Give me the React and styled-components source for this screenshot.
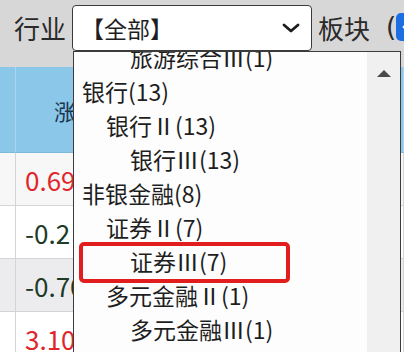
import React from 'react'
import styled, { createGlobalStyle } from 'styled-components'

const GlobalStyle = createGlobalStyle`
  html, body {
    margin: 0;
    padding: 0;
    background: #d8d7d7;
    overflow: hidden;
  }
  body {
    font-family: "Noto Sans CJK SC", "Noto Sans", sans-serif;
  }
`

const rows = [
  { value: '0.69', tone: 'up', bg: '#f7f7f8' },
  { value: '-0.2', tone: 'down', bg: '#ffffff' },
  { value: '-0.70', tone: 'down', bg: '#ececef' },
  { value: '3.10', tone: 'up', bg: '#ffffff' },
]

const options = [
  { label: '旅游综合Ⅲ(1)', level: 2 },
  { label: '银行(13)', level: 0 },
  { label: '银行Ⅱ(13)', level: 1 },
  { label: '银行Ⅲ(13)', level: 2 },
  { label: '非银金融(8)', level: 0 },
  { label: '证券Ⅱ(7)', level: 1 },
  { label: '证券Ⅲ(7)', level: 2, marked: true },
  { label: '多元金融Ⅱ(1)', level: 1 },
  { label: '多元金融Ⅲ(1)', level: 2 },
  { label: '保险(2)', level: 0 },
]

const App = () => {
  return (
    <Page>
      <GlobalStyle />
      <TopBar>
        <Label>行业</Label>
        <SelectBox>
          <span>【全部】</span>
          <svg width="18" height="10" viewBox="0 0 18 10">
            <path d="M2 2 L9 8 L16 2" fill="none" stroke="#1c1c1c" strokeWidth="2.8" strokeLinecap="round" strokeLinejoin="round" />
          </svg>
        </SelectBox>
        <Label $left={6}>板块</Label>
        <Paren>(</Paren>
        <Check>
          <svg width="20" height="20" viewBox="0 0 20 20">
            <path d="M4 10 L8.5 14.5 L16 6" fill="none" stroke="#fff" strokeWidth="2.6" strokeLinecap="round" strokeLinejoin="round" />
          </svg>
        </Check>
      </TopBar>

      <Table>
        <HeadCell />
        <HeadCell $pad>涨幅(%)</HeadCell>
        <HeadCell />
        {rows.map((r, i) => (
          <React.Fragment key={i}>
            <Cell $bg={r.bg} />
            <Cell $bg={r.bg} $tone={r.tone}>{r.value}</Cell>
            <Cell $bg={r.bg} />
          </React.Fragment>
        ))}
      </Table>

      <Dropdown>
        <List>
          <Items>
            {options.map((o, i) => (
              <Item key={i} $level={o.level} $marked={o.marked}>{o.label}</Item>
            ))}
          </Items>
        </List>
        <Scrollbar>
          <Arrow />
        </Scrollbar>
      </Dropdown>
    </Page>
  )
}
export default App

const Page = styled.div`
position: relative;
width: 404px;
height: 352px;
overflow: hidden;
background: #d8d7d7;
`

const TopBar = styled.div`
display: flex;
align-items: flex-start;
height: 67px;
padding: 5px 0 0 14px;
box-sizing: border-box;
white-space: nowrap;
`

const Label = styled.div`
flex-shrink: 0;
font-size: 26px;
line-height: 46px;
color: #2a2a2a;
margin-left: ${p => p.$left || 0}px;
margin-right: 6px;
`

const Paren = styled.div`
flex-shrink: 0;
font-size: 26px;
line-height: 44px;
color: #2a2a2a;
margin-left: 10px;
margin-right: 0;
font-family: "DejaVu Sans", sans-serif;
`

const SelectBox = styled.div`
flex-shrink: 0;
display: flex;
align-items: center;
justify-content: space-between;
width: 240px;
height: 46px;
box-sizing: border-box;
padding: 0 11px 0 8px;
background: #ffffff;
border: 1px solid #3a3a3a;
border-radius: 4px;
font-size: 23px;
color: #1e1e1e;
`

const Check = styled.div`
flex-shrink: 0;
display: flex;
align-items: center;
justify-content: center;
width: 28px;
height: 28px;
margin-top: 8px;
border-radius: 5px;
background: #1c6fe3;
`

const Table = styled.div`
display: grid;
grid-template-columns: 16px 120px 1fr;
grid-template-rows: 86px repeat(4, 53px);
`

const HeadCell = styled.div`
background: #8bc7e8;
border-right: 1px solid #a9d6ee;
border-bottom: 1px solid #7fb9da;
display: flex;
align-items: center;
padding-left: ${p => (p.$pad ? '38px' : '0')};
font-size: 22px;
color: #1b3550;
white-space: nowrap;
overflow: hidden;
`

const Cell = styled.div`
background: ${p => p.$bg};
border-right: 1px solid #d4d4d6;
border-bottom: 1px solid #d4d4d6;
display: flex;
align-items: center;
padding-left: 9px;
font-size: 26px;
color: ${p => (p.$tone === 'up' ? '#e0262a' : '#1d3b26')};
white-space: nowrap;
overflow: hidden;
`

const Dropdown = styled.div`
position: absolute;
left: 73px;
top: 51px;
width: 328px;
height: 320px;
display: flex;
background: #fdfdfd;
border: 1px solid #3c3c3c;
box-sizing: border-box;
`

const List = styled.div`
flex: 1;
overflow: hidden;
`

const Items = styled.div`
margin-top: -12px;
`

const Item = styled.div`
position: relative;
height: 34px;
line-height: 34px;
padding-left: ${p => 8 + p.$level * 24}px;
font-size: 23px;
color: #1e1e1e;
white-space: nowrap;

${p => p.$marked && `
  &::after {
    content: '';
    position: absolute;
    left: 5px;
    top: -2px;
    width: 211px;
    height: 41px;
    box-sizing: border-box;
    border: 4px solid #e11d1d;
    border-radius: 5px;
  }
`}
`

const Scrollbar = styled.div`
width: 33px;
background: #f0f0f0;
display: flex;
justify-content: center;
padding-top: 18px;
box-sizing: border-box;
`

const Arrow = styled.div`
width: 0;
height: 0;
border-left: 7.5px solid transparent;
border-right: 7.5px solid transparent;
border-bottom: 7px solid #4a4a4a;
`
